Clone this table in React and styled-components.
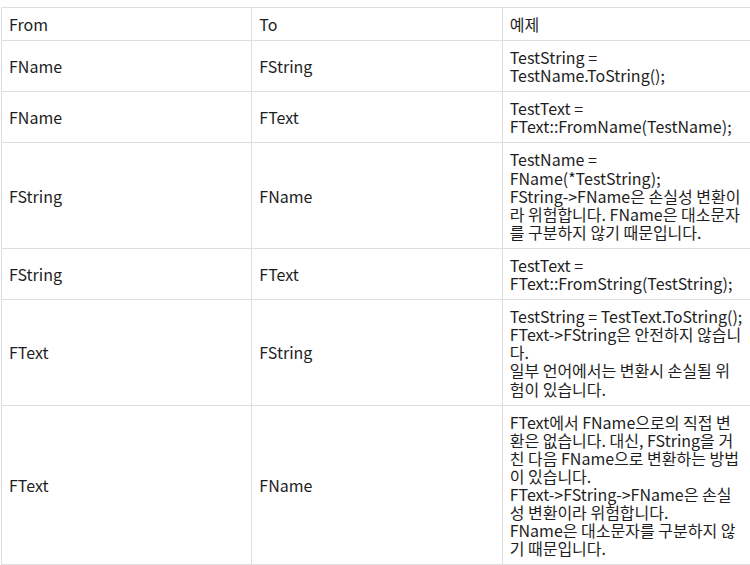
import React from 'react';
import styled, { createGlobalStyle } from 'styled-components';

const GlobalStyle = createGlobalStyle`
  body {
    margin: 0;
    background: #fff;
  }
`;

const Wrap = styled.div`
  padding-top: 7px;
  padding-left: 1px;
  overflow: hidden;
  width: 749px;
`;

const Table = styled.table`
  border-collapse: collapse;
  table-layout: fixed;
  width: 752px;
  font-family: "Noto Sans CJK KR", "Noto Sans", sans-serif;
  font-size: 16px;
  line-height: 18.1px;
  color: #1e1e1e;
`;

const Col = styled.col`
  width: 250px;
`;

const Cell = styled.td`
  border: 1px solid #dedede;
  padding: 7px 8px 7px 7px;
  vertical-align: middle;
`;

const HeadCell = styled(Cell).attrs({ as: 'th' })`
  font-weight: normal;
  text-align: left;
`;

const rows = [
  ['FName', 'FString', ['TestString = TestName.ToString();']],
  ['FName', 'FText', ['TestText = FText::FromName(TestName);']],
  ['FString', 'FName', ['TestName = FName(*TestString);', 'FString->FName은 손실성 변환이라 위험합니다. FName은 대소문자를 구분하지 않기 때문입니다.']],
  ['FString', 'FText', ['TestText = FText::FromString(TestString);']],
  ['FText', 'FString', ['TestString = TestText.ToString();', 'FText->FString은 안전하지 않습니다.', '일부 언어에서는 변환시 손실될 위험이 있습니다.']],
  ['FText', 'FName', ['FText에서 FName으로의 직접 변환은 없습니다. 대신, FString을 거친 다음 FName으로 변환하는 방법이 있습니다.', 'FText->FString->FName은 손실성 변환이라 위험합니다.', 'FName은 대소문자를 구분하지 않기 때문입니다.']],
];

const App = () => {
  return (
    <Wrap>
      <GlobalStyle />
      <Table>
        <colgroup>
          <Col />
          <Col />
          <Col />
        </colgroup>
        <thead>
          <tr>
            <HeadCell>From</HeadCell>
            <HeadCell>To</HeadCell>
            <HeadCell>예제</HeadCell>
          </tr>
        </thead>
        <tbody>
          {rows.map((r, i) => (
            <tr key={i}>
              <Cell>{r[0]}</Cell>
              <Cell>{r[1]}</Cell>
              <Cell>
                {r[2].map((line, j) => (
                  <React.Fragment key={j}>
                    {j > 0 && <br />}
                    {line}
                  </React.Fragment>
                ))}
              </Cell>
            </tr>
          ))}
        </tbody>
      </Table>
    </Wrap>
  );
};

export default App;
